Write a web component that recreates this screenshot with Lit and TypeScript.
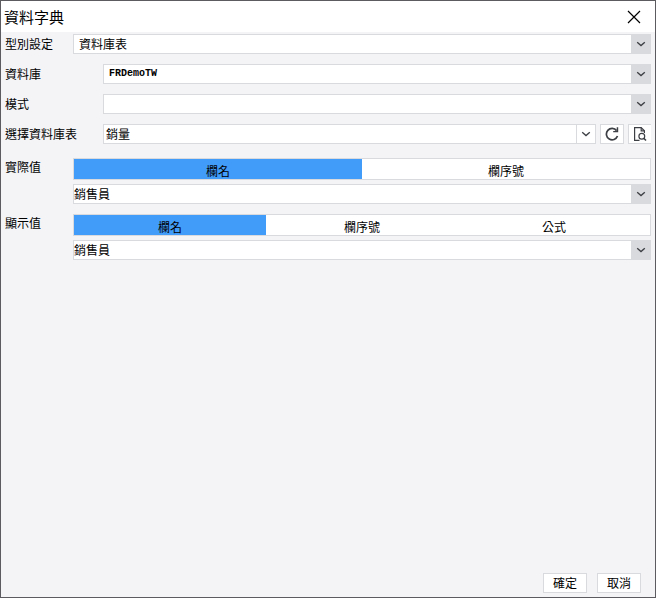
import { LitElement, html, css } from "lit";
import { customElement, property, state } from "lit/decorators.js";
import { classMap } from "lit/directives/class-map.js";

const controlFont = css`
  button,
  select {
    margin: 0;
    border-radius: 0;
    font: inherit;
    color: inherit;
  }
`;

@customElement("drop-down")
class DropDown extends LitElement {
  @property() label = "";
  @property() value = "";
  @property() variant = "";

  static styles = [
    controlFont,
    css`
      :host {
        display: block;
        min-width: 0;
      }
      .box {
        display: grid;
        grid-template-columns: minmax(0, 1fr) 20px;
        height: 20px;
      }
      .field {
        grid-area: 1 / 1 / 2 / 3;
        box-sizing: border-box;
        width: 100%;
        height: 20px;
        padding: 0 20px 0 0;
        border: 1px solid #d9dadd;
        background: #fff;
        appearance: none;
        line-height: 18px;
      }
      .inset .field {
        padding-left: 5px;
      }
      .plain .field {
        padding-left: 2px;
      }
      .latin .field {
        padding-left: 5px;
        font: bold 10px/18px "Liberation Mono", monospace;
      }
      .arrow {
        grid-area: 1 / 2;
        display: flex;
        align-items: center;
        justify-content: center;
        z-index: 1;
        background: #d9dadd;
        pointer-events: none;
      }
      .plain .arrow {
        box-sizing: border-box;
        border: 1px solid #d9dadd;
        background: #fff;
      }
    `,
  ];

  render() {
    return html`<div class="box ${this.variant}">
      <select class="field" aria-label=${this.label}>
        <option>${this.value}</option>
      </select>
      <span class="arrow">
        <svg width="10" height="6" viewBox="0 0 10 6" fill="none" stroke="#3c3f44" stroke-width="1.3">
          <path d="M1.2 1.2 L5 4.6 L8.8 1.2" />
        </svg>
      </span>
    </div>`;
  }
}

@customElement("tab-strip")
class TabStrip extends LitElement {
  @property({ attribute: false }) items: string[] = [];
  @state() selected = 0;

  static styles = [
    controlFont,
    css`
      .strip {
        display: flex;
        box-sizing: border-box;
        height: 22px;
        border: 1px solid #d9dadd;
      }
      .tab {
        flex: 1 1 0;
        padding: 3px 0 0;
        border: 0;
        background: #fff;
        line-height: 17px;
      }
      .active {
        background: #419bf9;
      }
    `,
  ];

  render() {
    return html`<div class="strip" role="tablist">
      ${this.items.map(
        (item, i) => html`<button
          role="tab"
          class=${classMap({ tab: true, active: i === this.selected })}
          aria-selected=${i === this.selected ? "true" : "false"}
          @click=${() => (this.selected = i)}
        >${item}</button>`
      )}
    </div>`;
  }
}

@customElement("app-root")
class AppRoot extends LitElement {
  static styles = [
    controlFont,
    css`
      :host {
        display: flex;
        flex-direction: column;
        box-sizing: border-box;
        min-height: 100vh;
        border: 1px solid #5c5c60;
        background: #f4f4f7;
        color: #000;
        font: 12px/20px "Noto Sans CJK TC", sans-serif;
      }
      .title-bar {
        display: flex;
        align-items: center;
        justify-content: space-between;
        height: 31px;
        padding: 0 14px 0 3px;
        background: #fff;
      }
      .title {
        margin: 0;
        font-size: 15px;
        font-weight: 400;
      }
      .close {
        display: flex;
        padding: 0;
        border: 0;
        background: none;
      }
      .form {
        display: flex;
        flex: 1;
        flex-direction: column;
        gap: 10px;
        padding: 2px 4px 10px;
      }
      .row {
        display: grid;
        grid-template-columns: 98px minmax(0, 1fr);
      }
      .narrow {
        grid-template-columns: 68px minmax(0, 1fr);
      }
      .groups {
        display: flex;
        flex-direction: column;
        gap: 10px;
        padding-top: 4px;
      }
      .groups .row {
        line-height: 18px;
      }
      .stack {
        display: flex;
        flex-direction: column;
        gap: 4px;
      }
      .table-pick {
        display: grid;
        grid-template-columns: minmax(0, 1fr) 24px 23px;
        gap: 4px;
      }
      .tool {
        display: flex;
        align-items: center;
        justify-content: center;
        height: 20px;
        padding: 0;
        border: 1px solid #d9dadd;
        background: #fff;
      }
      .tool.open {
        border-right: 0;
      }
      .actions {
        display: flex;
        justify-content: flex-end;
        gap: 10px;
        padding: 0 14px 4px;
      }
      .action {
        width: 44px;
        height: 20px;
        padding: 0;
        border: 1px solid #d9dadd;
        background: #fff;
        line-height: 18px;
      }
    `,
  ];

  render() {
    return html`
      <header class="title-bar">
        <h1 class="title">資料字典</h1>
        <button class="close" aria-label="關閉">
          <svg width="14" height="14" viewBox="0 0 14 14" stroke="#000" stroke-width="1.2">
            <path d="M1 1 L13 13 M13 1 L1 13" />
          </svg>
        </button>
      </header>
      <main class="form">
        <label class="row narrow">
          <span>型別設定</span>
          <drop-down label="型別設定" value="資料庫表" variant="inset"></drop-down>
        </label>
        <label class="row">
          <span>資料庫</span>
          <drop-down label="資料庫" value="FRDemoTW" variant="latin"></drop-down>
        </label>
        <label class="row">
          <span>模式</span>
          <drop-down label="模式"></drop-down>
        </label>
        <div class="row">
          <span>選擇資料庫表</span>
          <div class="table-pick">
            <drop-down label="選擇資料庫表" value="銷量" variant="plain"></drop-down>
            <button class="tool" aria-label="重新整理">
              <svg width="14" height="14" viewBox="0 0 14 14" fill="none" stroke="#3c3f44" stroke-width="1.7">
                <path d="M11.6 3.6 A5.7 5.7 0 1 0 12.5 9" />
                <path d="M13.2 0.2 V5.2 H8.2 V3.9 H11.7 V0.2 Z" fill="#3c3f44" stroke="none" />
              </svg>
            </button>
            <button class="tool open" aria-label="預覽">
              <svg width="14" height="16" viewBox="0 0 14 16" fill="none" stroke="#3c3f44" stroke-width="1.2">
                <path d="M6.5 14.4 H1.6 V1.6 H8.2 L11.4 4.8 V7" />
                <path d="M8.2 1.6 V4.8 H11.4" />
                <circle cx="8.8" cy="10.2" r="2.9" />
                <path d="M10.8 12.2 L13 14.6" stroke-width="1.5" />
              </svg>
            </button>
          </div>
        </div>
        <div class="groups">
          <div class="row narrow">
            <span>實際值</span>
            <div class="stack">
              <tab-strip .items=${["欄名", "欄序號"]}></tab-strip>
              <drop-down label="實際值" value="銷售員"></drop-down>
            </div>
          </div>
          <div class="row narrow">
            <span>顯示值</span>
            <div class="stack">
              <tab-strip .items=${["欄名", "欄序號", "公式"]}></tab-strip>
              <drop-down label="顯示值" value="銷售員"></drop-down>
            </div>
          </div>
        </div>
      </main>
      <footer class="actions">
        <button class="action">確定</button>
        <button class="action">取消</button>
      </footer>
    `;
  }
}
